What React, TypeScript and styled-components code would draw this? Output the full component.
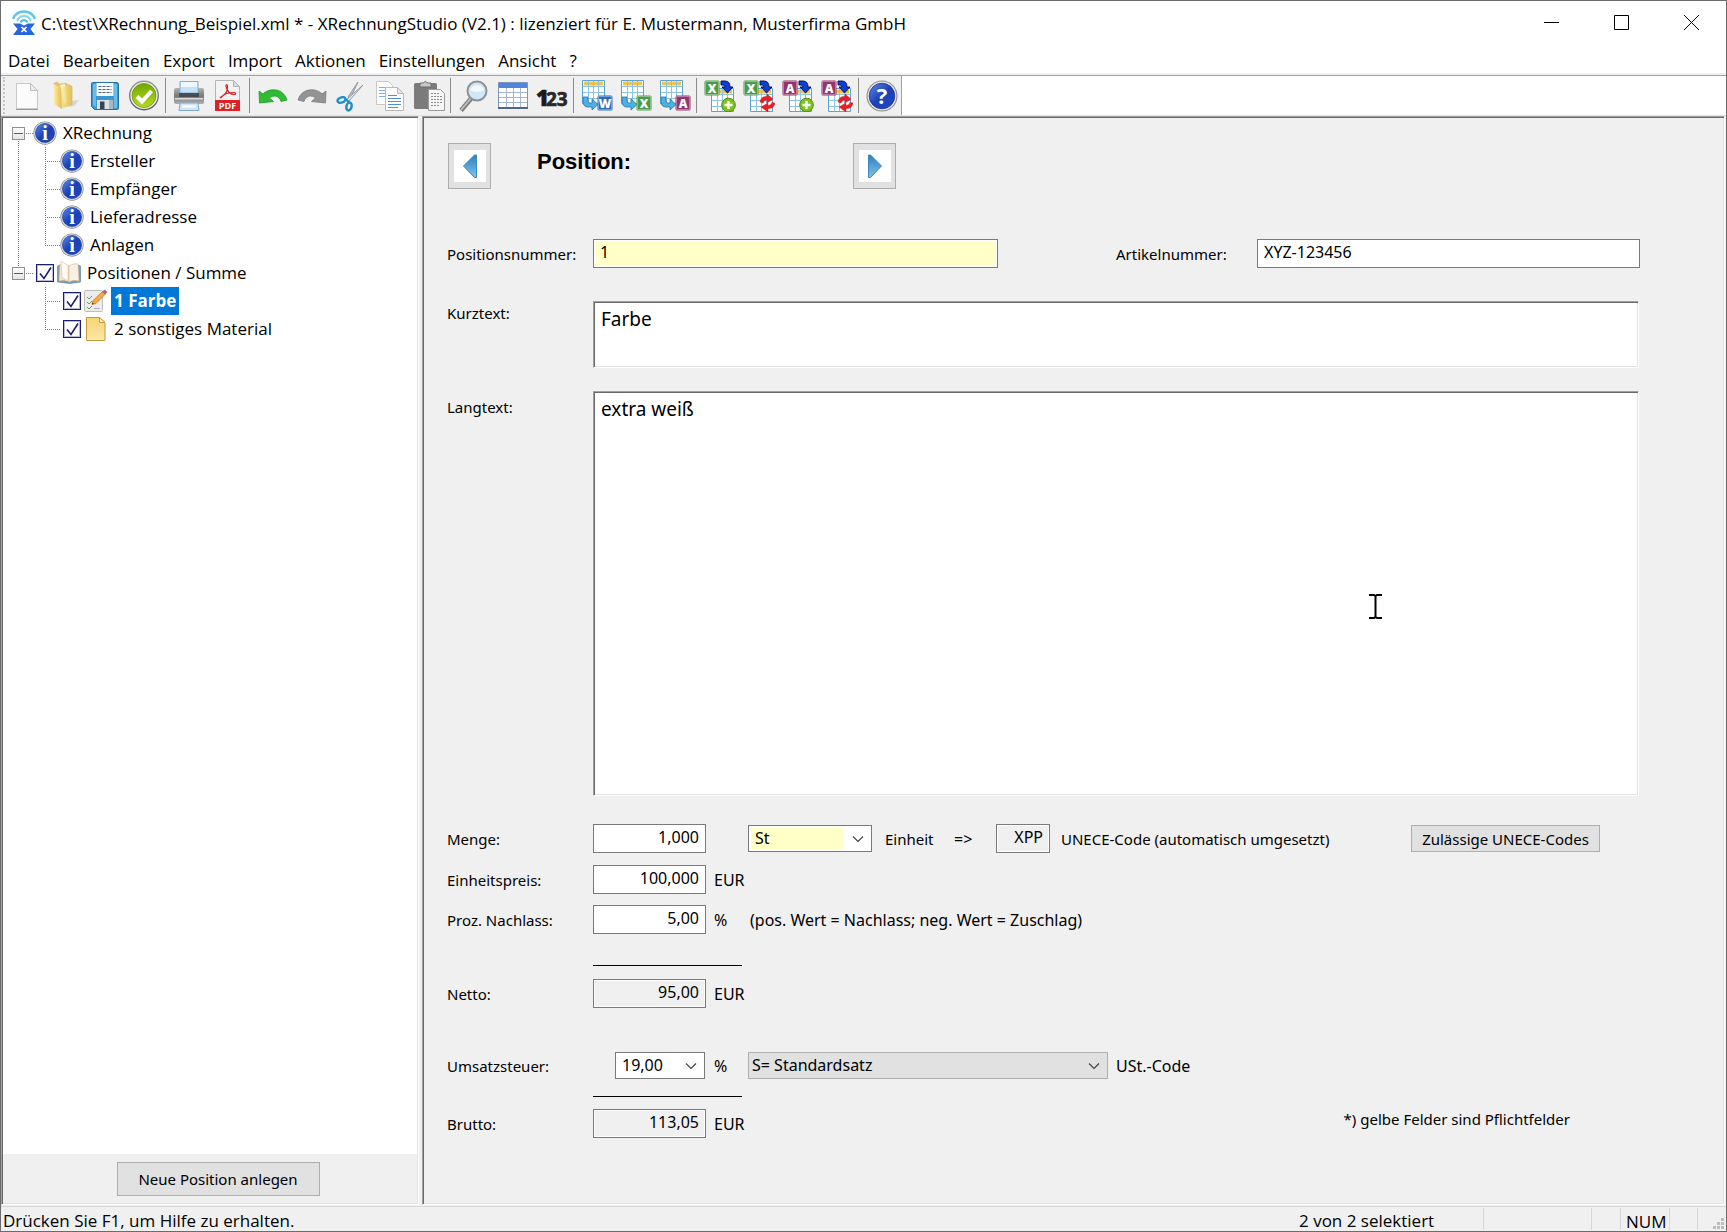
import React, { useState } from "react";
import styled, { createGlobalStyle, css } from "styled-components";

const uiFont = `"Open Sans", "Noto Sans", sans-serif`;
const formFont = `"Noto Sans", "Open Sans", sans-serif`;

const GlobalStyle = createGlobalStyle`
  * { box-sizing: border-box; }
  body { margin: 0; background: #f0f0f0; color: #000; font: 17px/24px ${uiFont}; }
  button, input, select, textarea { font: inherit; color: inherit; margin: 0; border-radius: 0; }
`;

/* ---------- window frame ---------- */

const Window = styled.div`
  display: flex;
  flex-direction: column;
  min-height: 100vh;
  border: 1px solid #6b6b6e;
  background: #f0f0f0;
`;

const TitleBar = styled.header`
  display: flex;
  align-items: center;
  height: 44px;
  padding-left: 10px;
  background: #fff;
`;

const Title = styled.h1`
  flex: 1;
  margin: 0;
  padding: 2px 0 0 4px;
  font-size: 17px;
  font-weight: 400;
  line-height: 24px;
  white-space: nowrap;
`;

const CaptionButton = styled.button`
  display: grid;
  place-items: center;
  width: 70px;
  height: 44px;
  padding: 0 0 2px;
  border: 0;
  background: transparent;
`;

const MenuBar = styled.nav`
  display: flex;
  gap: 13px;
  height: 30px;
  padding: 4px 7px 0;
  background: #fff;
  border-bottom: 2px solid #f0f0f0;
`;

const MenuItem = styled.button`
  padding: 0;
  border: 0;
  background: transparent;
  line-height: 24px;
`;

/* ---------- tool bar ---------- */

const ToolStrip = styled.div`
  display: flex;
  height: 41px;
  background: #fff;
  border-top: 1px solid #a0a0a0;
  border-bottom: 1px solid #e3e3e3;
`;

const ToolBar = styled.div`
  display: flex;
  align-items: center;
  background: #f0f0f0;
  border-right: 1px solid #a0a0a0;
`;

const Gripper = styled.span`
  width: 4px;
  height: 37px;
  margin-left: 2px;
  border-left: 2px dotted #c4c4c4;
`;

const ToolButton = styled.button`
  display: grid;
  place-items: center;
  width: 39px;
  height: 39px;
  padding: 0;
  border: 0;
  background: transparent;
`;

const ToolSeparator = styled.span`
  width: 6px;
  height: 35px;
  background: linear-gradient(#8c8c8c, #8c8c8c) no-repeat 2px 0 / 1px 100%;
`;

/* ---------- panes ---------- */

const Panes = styled.main`
  display: grid;
  grid-template-columns: 418px minmax(0, 1fr);
  column-gap: 3px;
  flex: 1;
  padding: 0 1px 1px 0;
`;

const sunken = css`
  border: 1px solid;
  border-color: #a0a0a0 #fff #fff #a0a0a0;
  box-shadow: inset 1px 1px 0 #696969, inset -1px -1px 0 #e3e3e3;
`;

const SidePane = styled.aside`
  ${sunken}
  display: flex;
  flex-direction: column;
  padding: 1px 1px 0;
`;

const Tree = styled.ul`
  flex: 1;
  margin: 0;
  padding: 1px 0 0;
  list-style: none;
  background: #fff;
`;

const TreeRow = styled.li`
  display: flex;
  align-items: center;
  height: 28px;
`;

const dotsDown = "repeating-linear-gradient(180deg, #808080 0 1px, transparent 1px 2px)";
const dotsAcross = "repeating-linear-gradient(90deg, #808080 0 1px, transparent 1px 2px)";

const Guide = styled.span<{ $line?: boolean }>`
  align-self: stretch;
  width: 27px;
  background: ${(p) => (p.$line ? `${dotsDown} no-repeat 15px 0 / 1px 100%` : "none")};
`;

type Branch = "first" | "middle" | "last";

const Connector = styled.span<{ $branch: Branch }>`
  display: grid;
  align-items: center;
  align-self: stretch;
  width: 30px;
  padding-left: 9px;
  background:
    ${dotsAcross} no-repeat 15px 14px / 15px 1px,
    ${dotsDown} no-repeat 15px ${(p) => (p.$branch === "first" ? "14px" : "0")} / 1px
      ${(p) => (p.$branch === "middle" ? "28px" : "14px")};
`;

const Expander = styled.button`
  display: grid;
  place-items: center;
  width: 13px;
  height: 13px;
  padding: 0;
  border: 1px solid #919191;
  background: linear-gradient(#fff, #e4e4e4);
  &::after {
    content: "";
    width: 9px;
    height: 1px;
    background: #3c5fb4;
  }
`;

const TickLabel = styled.label`
  display: grid;
  width: 18px;
  height: 18px;
  margin-right: 3px;
  & > * { grid-area: 1 / 1; }
  & > svg { pointer-events: none; visibility: hidden; }
  & > input:checked + svg { visibility: visible; }
`;

const TickInput = styled.input`
  appearance: none;
  width: 18px;
  height: 18px;
  background: #fff;
  border: 1px solid #1c1c70;
  box-shadow: inset 0 0 0 1px #b9b9dc;
`;

const TickGap = styled.span`
  width: 3px;
`;

const TreeIcon = styled.span`
  display: grid;
  place-items: center;
  width: 24px;
  height: 28px;
  margin-right: 3px;
`;

const TreeLabel = styled.span<{ $selected?: boolean }>`
  padding: 0 3px;
  line-height: 28px;
  white-space: nowrap;
  ${(p) => p.$selected && css`background: #0078d7; color: #fff; font-weight: 700;`}
`;

const SideFooter = styled.div`
  display: flex;
  justify-content: center;
  padding: 8px 0 8px 16px;
`;

const PushButton = styled.button<{ $tall?: boolean }>`
  height: ${(p) => (p.$tall ? 34 : 27)}px;
  width: ${(p) => (p.$tall ? 203 : 189)}px;
  padding: 0;
  border: 1px solid #adadad;
  background: #e1e1e1;
  font-family: ${formFont};
  font-size: 15px;
  line-height: 24px;
  white-space: nowrap;
`;

/* ---------- form ---------- */

const Form = styled.form`
  ${sunken}
  display: flex;
  flex-direction: column;
  padding: 26px 84px 66px 24px;
  font: 16px/24px ${formFont};
`;

const Pager = styled.div`
  display: flex;
  margin-bottom: 50px;
  padding-left: 1px;
`;

const PagerButton = styled.button`
  display: grid;
  place-items: center;
  width: 43px;
  height: 46px;
  padding: 0;
  border: 1px solid #adadad;
  background: #e1e1e1;
`;

const ArrowTile = styled.span`
  display: grid;
  place-items: center;
  width: 32px;
  height: 32px;
  background: #fff;
`;

const Heading = styled.h2`
  width: 362px;
  margin: 0;
  padding: 6px 46px;
  font: 700 22px/26px "Liberation Sans", Arial, sans-serif;
`;

const HeadRow = styled.div`
  display: grid;
  grid-template-columns: 146px 405fr 118px 141px 383fr;
  align-items: center;
  margin-bottom: 33px;
`;

const FieldLabel = styled.label`
  font-size: 15px;
  white-space: nowrap;
`;

const HeadFieldLabel = styled(FieldLabel)`
  grid-column: 4;
`;

const TextRow = styled.div<{ $grow?: boolean }>`
  display: grid;
  grid-template-columns: 146px minmax(0, 1fr);
  margin-bottom: ${(p) => (p.$grow ? 28 : 23)}px;
  padding-right: 1px;
  ${(p) => p.$grow && css`
    flex: 1;
    & > label { padding-top: 4px; }
  `}
`;

const TextAreaBox = styled.div`
  position: relative;
  display: grid;
`;

const TextArea = styled.textarea<{ $tall?: boolean }>`
  ${sunken}
  width: 100%;
  height: 100%;
  min-height: ${(p) => (p.$tall ? 200 : 67)}px;
  padding: 5px 7px;
  background: #fff;
  font-size: 19px;
  line-height: 24px;
  resize: none;
  outline: 0;
`;

const Pointer = styled.svg`
  position: absolute;
  top: 202px;
  right: 256px;
  pointer-events: none;
`;

const TextInput = styled.input<{ $required?: boolean; $width?: number }>`
  width: ${(p) => (p.$width ? `${p.$width}px` : "100%")};
  height: 29px;
  padding: 0 6px 3px;
  border: 1px solid #7a7a7a;
  box-shadow: inset 0 0 0 1px #fff;
  background: ${(p) => (p.$required ? "#ffffc8" : p.readOnly ? "#f0f0f0" : "#fff")};
  text-align: ${(p) => (p.$width ? "right" : "left")};
  line-height: 24px;
`;

const AmountRow = styled.div<{ $after?: number }>`
  display: grid;
  grid-template-columns: 146px 113px 42px minmax(0, 1fr);
  align-items: center;
  margin-bottom: ${(p) => p.$after ?? 0}px;
`;

const Unit = styled.span`
  padding-left: 8px;
`;

const Inline = styled.div`
  display: flex;
  align-items: center;
  white-space: nowrap;
`;

const Hint = styled.span`
  padding-left: 2px;
  white-space: nowrap;
`;

const UnitText = styled.label`
  width: 69px;
  padding-left: 13px;
  font-size: 15px;
`;

const Arrow = styled.span`
  width: 55px;
  padding-left: 13px;
`;

const CodeLabel = styled.label`
  flex: 1;
  padding-left: 11px;
  font-size: 15px;
`;

const CodesButton = styled(PushButton)`
  margin-right: 40px;
`;

const ComboBox = styled.span<{ $width: number; $end?: boolean }>`
  display: grid;
  align-items: center;
  justify-items: end;
  width: ${(p) => p.$width}px;
  justify-self: ${(p) => (p.$end ? "end" : "start")};
  margin-right: ${(p) => (p.$end ? 1 : 0)}px;
  & > * { grid-area: 1 / 1; }
  & > svg { margin-right: 8px; pointer-events: none; }
`;

const Combo = styled.select<{ $look: "required" | "plain" | "grey" }>`
  appearance: none;
  width: 100%;
  height: 27px;
  padding: 0 28px 2px ${(p) => (p.$look === "grey" ? 3 : 6)}px;
  border: 1px solid ${(p) => (p.$look === "grey" ? "#adadad" : "#7a7a7a")};
  background: ${(p) =>
    p.$look === "required"
      ? "linear-gradient(#ffffc8, #ffffc8) no-repeat 2px 2px / calc(100% - 30px) 21px #fff"
      : p.$look === "grey"
        ? "#e1e1e1"
        : "#fff"};
`;

const SumLine = styled.hr<{ $after: number }>`
  width: 149px;
  margin: 0 0 ${(p) => p.$after}px 146px;
  border: 0;
  border-top: 1px solid #000;
`;

const Footnote = styled.div`
  align-self: start;
  padding-right: 70px;
  font-size: 15px;
  line-height: 20px;
  text-align: right;
`;

/* ---------- status bar ---------- */

const StatusBar = styled.footer`
  display: flex;
  align-items: center;
  height: 25px;
  padding-left: 2px;
  border-top: 1px solid #d7d7d7;
  background: #f0f0f0;
  white-space: nowrap;
  line-height: 28px;
`;

const StatusText = styled.span`
  flex: 1;
  padding-top: 4px;
`;

const StatusCell = styled.span<{ $width: number }>`
  width: ${(p) => p.$width}px;
  height: 22px;
  padding-left: 5px;
  border-left: 1px solid #d7d7d7;
`;

const SelectionCell = styled.span`
  width: 184px;
  padding-top: 4px;
`;

const SizeGrip = styled.svg`
  align-self: flex-end;
  margin: 0 1px 1px 0;
`;

/* ---------- drawings ---------- */

const Logo = () => (
  <svg width="26" height="26" viewBox="0 0 26 26" fill="none">
    <path d="M2 9C4 4 8 1.500 13 1.500S22 4 24 9" stroke="#5cc8e4" strokeWidth="2.400" />
    <path d="M6 11C7.500 7.500 10 6 13 6s5.500 1.500 7 5" stroke="#7fd8ee" strokeWidth="2.200" />
    <path d="M9.500 12.500C10.500 10.500 11.500 10 13 10s2.500.5 3.500 2.500" stroke="#4fb5e6" strokeWidth="2" />
    <path d="M2 13.500h7l4 2 4-2h7L19.500 19l4.500 6H2l4.500-6z" fill="#2766e0" />
    <path d="M10.500 17l5 5M15.500 17l-5 5" stroke="#fff" strokeWidth="1.600" />
  </svg>
);

const NewIcon = () => (
  <svg width="32" height="32" viewBox="0 0 32 32">
    <path d="M5.500 3.500h14l7 7v18h-21z" fill="#fbfbfb" stroke="#c9c9c9" />
    <path d="M19.500 3.500l7 7h-7z" fill="#ececec" stroke="#bdbdbd" />
    <path d="M5 29.500h22" stroke="#9b9b9b" />
  </svg>
);

const OpenIcon = () => (
  <svg width="32" height="32" viewBox="0 0 32 32">
    <defs>
      <linearGradient id="folder" x1="0" x2="1"><stop offset="0" stopColor="#fbeaa2" /><stop offset="1" stopColor="#e5bd4d" /></linearGradient>
    </defs>
    <path d="M18 27l6-1 5-6-7 1z" fill="#c9c9c9" opacity=".7" />
    <path d="M4 3.500l3-1.500 2 2 7-.5 6 3v18l-12 3z" fill="#e7c868" stroke="#d3ad45" strokeWidth=".6" />
    <path d="M10 5l5-1 2 17-3 3z" fill="#fff6d5" />
    <path d="M4 4l7 4 1 21-8-5z" fill="url(#folder)" />
    <path d="M11 8l7-3 4 2v18l-10 4z" fill="url(#folder)" opacity=".75" />
  </svg>
);

const SaveIcon = () => (
  <svg width="32" height="32" viewBox="0 0 32 32">
    <path d="M2.500 3.500q0-1 1-1h25l1 1v25q0 1-1 1h-23l-3-3z" fill="#3f97cf" stroke="#2272aa" />
    <path d="M4 4h3v23l-3-2zM25 4h3v24h-3z" fill="#6cbce8" />
    <path d="M7.500 3h17v13h-17z" fill="#f4fafd" />
    <path d="M9.500 6.500h13M9.500 9.500h13M9.500 12.500h13" stroke="#59646c" strokeDasharray="3 1" />
    <path d="M8 20h16v9H8z" fill="#d9e2e8" />
    <path d="M11 21.500h4.500V29H11z" fill="#39444d" />
    <path d="M20 20h4v9h-4z" fill="#a9b8c1" />
  </svg>
);

const CheckIcon = () => (
  <svg width="32" height="32" viewBox="0 0 32 32">
    <defs>
      <linearGradient id="ring" x2="0" y2="1"><stop stopColor="#9a9a9a" /><stop offset="1" stopColor="#5c5c5c" /></linearGradient>
      <linearGradient id="lime" x2="0" y2="1"><stop stopColor="#6fa800" /><stop offset="1" stopColor="#b5dc1c" /></linearGradient>
    </defs>
    <circle cx="16" cy="15.500" r="15" fill="url(#ring)" />
    <circle cx="16" cy="15.500" r="13.600" fill="#f3f3f0" />
    <circle cx="16" cy="15.500" r="12" fill="url(#lime)" stroke="#6f8f1f" strokeWidth=".8" />
    <path d="M9 16.500l5 5L23.500 11" fill="none" stroke="#fff" strokeWidth="4" />
  </svg>
);

const PrintIcon = () => (
  <svg width="32" height="32" viewBox="0 0 32 32">
    <defs>
      <linearGradient id="printer" x2="0" y2="1"><stop stopColor="#b4b4b4" /><stop offset=".5" stopColor="#77787a" /><stop offset="1" stopColor="#b0b0b0" /></linearGradient>
    </defs>
    <rect x="1" y="8" width="30" height="16" rx="2" fill="url(#printer)" />
    <path d="M7 1.500h18V13H7z" fill="#c4e1f6" stroke="#7fb0d6" />
    <path d="M8 2h16v5H8z" fill="#eef8ff" />
    <path d="M6 13h20v4H6z" fill="#4c4d50" />
    <path d="M2 18h28v1.500H2z" fill="#dcdcdc" />
    <path d="M7 23h18l1 7.500H6z" fill="#cfe6f6" stroke="#7ea9c9" />
    <path d="M9 25.500h14v2H9z" fill="#fff" />
  </svg>
);

const PdfIcon = () => (
  <svg width="32" height="32" viewBox="0 0 32 32">
    <path d="M3.500.5h18l6 6v24h-24z" fill="#f3f3f3" stroke="#b4b4b4" />
    <path d="M21.500.5v6h6z" fill="#d8d8d8" stroke="#b4b4b4" />
    <path d="M9 17c4-2 7-6 6.500-11-.3-2-2-1.500-1.500.5.800 4 4 8 8 8 2.500 0 2-2-.5-2C17 12.500 12 14 9.500 17c-1 1-2 .8-.5 0z" fill="none" stroke="#dc2026" strokeWidth="1.200" />
    <path d="M3 20h25v11H3z" fill="#dd2127" />
    <text x="15.500" y="28.500" textAnchor="middle" fontFamily="Open Sans" fontWeight="700" fontSize="9" fill="#fff">PDF</text>
  </svg>
);

const UndoIcon = ({ redo = false }: { redo?: boolean }) => (
  <svg width="32" height="32" viewBox="0 0 32 32">
    <path
      transform={redo ? "translate(32 0) scale(-1 1)" : undefined}
      d="M2 11l4 3c5-6 20-7 24 6l-6 1.500C22 15 16 15 12.500 18l4 3.500L2.500 23z"
      fill={redo ? "#939393" : "#2fbb34"}
      stroke={redo ? "#7b7b7b" : "#1d9a2a"}
      strokeWidth=".8"
    />
  </svg>
);

const CutIcon = () => (
  <svg width="32" height="32" viewBox="0 0 32 32" fill="none">
    <path d="M23 2l-8 17-2-2z" fill="#b9c3cb" stroke="#7d8a94" strokeWidth=".8" />
    <path d="M28 5L14 21l-2-2z" fill="#dfe5e9" stroke="#7d8a94" strokeWidth=".8" />
    <ellipse cx="6.500" cy="20" rx="4.200" ry="2.600" transform="rotate(-20 6.500 20)" stroke="#1f8fc9" strokeWidth="2.400" />
    <ellipse cx="14" cy="26.500" rx="2.600" ry="4" transform="rotate(15 14 26.500)" stroke="#1f8fc9" strokeWidth="2.400" />
    <path d="M10 19l5 4" stroke="#1f8fc9" strokeWidth="2" />
  </svg>
);

const CopyIcon = () => (
  <svg width="32" height="32" viewBox="0 0 32 32">
    <path d="M2.500 1.500h12l4 4v19h-16z" fill="#fdfdfd" stroke="#c8c8c8" />
    <path d="M5 7.500h9M5 10.500h9M5 13.500h9M5 16.500h6" stroke="#7fb1de" />
    <path d="M11.500 7.500h12l6 6v17h-18z" fill="#fdfdfd" stroke="#b9b9b9" />
    <path d="M23.500 7.500v6h6z" fill="#e5e5e5" stroke="#b9b9b9" />
    <path d="M14 15.500h9M14 18.500h13M14 21.500h13M14 24.500h13M14 27.500h10" stroke="#4f90d0" />
  </svg>
);

const PasteIcon = () => (
  <svg width="32" height="32" viewBox="0 0 32 32">
    <rect x="1" y="3" width="23" height="26" rx="1.500" fill="#7b7b7b" />
    <path d="M7 3h3q2-3 5 0h3v4H7z" fill="#c9c9c9" stroke="#6c6c6c" />
    <path d="M15.500 9.500h12l4 4v17h-16z" fill="#f6f6f6" stroke="#9a9a9a" />
    <path d="M18 13.500h8M18 16.500h11M18 19.500h11M18 22.500h11M18 25.500h8" stroke="#8b8b8b" strokeDasharray="2 1" />
  </svg>
);

const FindIcon = () => (
  <svg width="32" height="32" viewBox="0 0 32 32">
    <path d="M3 30.500L13.500 18" stroke="#7c7c7c" strokeWidth="4.600" />
    <path d="M3 30L13.500 17.500" stroke="#c5c5c5" strokeWidth="1.600" />
    <circle cx="19" cy="11" r="9.500" fill="#cfe7f8" stroke="#8b9196" strokeWidth="2" />
    <path d="M12 10a7.500 7.500 0 0 1 14 0q-7 4-14 0z" fill="#f2faff" />
  </svg>
);

const TableIcon = () => (
  <svg width="32" height="32" viewBox="0 0 32 32">
    <path d="M1.500 2.500h29v25h-29z" fill="#fff" stroke="#7d93bd" />
    <path d="M2 3h28v5H2z" fill="#4d86dc" />
    <path d="M2 12.500h28M2 17.500h28M2 22.500h28M9.500 8v19M16.500 8v19M23.500 8v19" stroke="#a5b5d6" />
    <path d="M1 28h30" stroke="#52658d" strokeWidth="2" />
  </svg>
);

const NumbersIcon = () => (
  <svg width="34" height="32" viewBox="0 0 34 32">
    <text x="1" y="26" fontFamily="Open Sans" fontWeight="800" fontSize="22" fill="#1c1a1b" stroke="#1c1a1b" strokeWidth=".6">1</text>
    <text x="11" y="26" fontFamily="Open Sans" fontWeight="700" fontSize="19" fill="#2b2728" stroke="#2b2728" strokeWidth=".6">23</text>
  </svg>
);

const appColors: Record<string, string> = { W: "#2b6cb8", X: "#4c9a48", A: "#96346f" };

const MiniGrid = ({ x, y }: { x: number; y: number }) => (
  <g transform={`translate(${x} ${y})`}>
    <path d="M.5.5h22v23H.5z" fill="#fff" stroke="#5aa3d0" />
    <path d="M2 1.500h19v4H2z" fill="#f3c34e" />
    <path d="M1 6.500h21M1 12.500h21M1 18.500h21M6.500 1v22M11.500 1v22M16.500 1v22" stroke="#8dc3e3" />
  </g>
);

const AppTile = ({ letter, x, y }: { letter: string; x: number; y: number }) => (
  <g transform={`translate(${x} ${y})`}>
    <rect x=".5" y=".5" width="15" height="15" rx="1.500" fill={appColors[letter]} />
    <rect x="1.500" y="1.500" width="13" height="13" fill="none" stroke="#fff" strokeOpacity=".35" />
    <text x="8" y="12.500" textAnchor="middle" fontFamily="Open Sans" fontWeight="800" fontSize="12" fill="#fff">{letter}</text>
  </g>
);

const ExportIcon = ({ letter }: { letter: string }) => (
  <svg width="32" height="32" viewBox="0 0 32 32">
    <MiniGrid x={1} y={0} />
    <path d="M2 17h5v4q0 2 2 2h2v-4l6 5.500-6 5.500v-3H7q-5 0-5-6z" fill="#4fb0e4" stroke="#2176ac" strokeWidth=".8" />
    <AppTile letter={letter} x={16} y={15} />
  </svg>
);

const ImportIcon = ({ letter, refresh = false }: { letter: string; refresh?: boolean }) => (
  <svg width="32" height="32" viewBox="0 0 32 32">
    <MiniGrid x={7} y={8} />
    <AppTile letter={letter} x={0} y={0} />
    <path d="M17 1h4q5 0 5 6h3l-5.500 6L18 7h3q0-2-2-2h-2z" fill="#0b3fd6" stroke="#020c50" strokeWidth=".9" />
    {refresh ? (
      <g fill="#f01c23" stroke="#c00a10" strokeWidth=".4">
        <path d="M17 22q1-6 7-5.500V14l6 5-6 4v-3q-3 0-4 3z" />
        <path d="M32 23q-1 6-7 5.500V32l-7-5 7-4v2.500q3 0 4-3z" />
      </g>
    ) : (
      <g>
        <circle cx="24.500" cy="25" r="6.800" fill="#7fc31c" stroke="#4f8a10" />
        <path d="M24.500 21v8M20.500 25h8" stroke="#fff" strokeWidth="2.400" />
      </g>
    )}
  </svg>
);

const BallIcon = ({ size, glyph }: { size: number; glyph: "?" | "i" }) => (
  <svg width={size} height={size} viewBox="0 0 32 32">
    <defs>
      <linearGradient id={`ball${size}`} x1="0" y1="0" x2="1" y2="1">
        <stop stopColor="#5f8df0" /><stop offset=".5" stopColor="#1b41b5" /><stop offset="1" stopColor="#1d49c6" />
      </linearGradient>
    </defs>
    <circle cx="16" cy="16" r="15.500" fill="#8d8d92" />
    <circle cx="16" cy="16" r="14.400" fill="#e4e4e6" />
    <circle cx="16" cy="16" r="12.800" fill={`url(#ball${size})`} stroke="#16308c" strokeWidth=".8" />
    <text
      x="16"
      y={glyph === "?" ? 24 : 25}
      textAnchor="middle"
      fontFamily={glyph === "?" ? "Open Sans" : "Liberation Serif"}
      fontWeight="700"
      fontSize={glyph === "?" ? 22 : 27}
      fill="#fff"
    >
      {glyph}
    </text>
  </svg>
);

const BookIcon = () => (
  <svg width="24" height="24" viewBox="0 0 24 24">
    <path d="M.5 5l3-1v15l8 1 9-1V4l3 1v16l-11 1.500L.5 21z" fill="#7f9db4" stroke="#587890" strokeWidth=".6" />
    <path d="M3 3q5-1 9 2v16q-4-3-10-1z" fill="#f4e3cd" stroke="#d2b99a" strokeWidth=".6" />
    <path d="M12 5q4-3 9-2l1 17q-6-2-10 1z" fill="#fbf1e3" stroke="#d2b99a" strokeWidth=".6" />
    <path d="M4 0l7 4.500V20l-6-3.500z" fill="#fffaf2" stroke="#d9c4a8" strokeWidth=".6" />
  </svg>
);

const NoteIcon = () => (
  <svg width="24" height="24" viewBox="0 0 24 24" fill="none">
    <rect x=".5" y="1.500" width="18" height="21" rx="1" fill="#ececec" stroke="#bcbcbc" />
    <path d="M3 8l2 2 3-3M3 13l2 2 3-3M3 18l2 2 3-3" stroke="#61a84d" />
    <path d="M10 19.500h6" stroke="#b0b0b0" />
    <path d="M8 15.500l1-4L19 2l3 2.500-10 10z" fill="#f2aa41" stroke="#b8762a" strokeWidth=".7" />
    <path d="M18 3l2.500-2.500 3 2.500-2.500 2.500z" fill="#a6688c" />
    <path d="M8 15.500l.5-2 1.500 1.200z" fill="#333" />
  </svg>
);

const SheetIcon = () => (
  <svg width="24" height="24" viewBox="0 0 24 24">
    <defs>
      <linearGradient id="sheet" x2="0" y2="1"><stop stopColor="#f6d573" /><stop offset="1" stopColor="#fbe7a8" /></linearGradient>
    </defs>
    <path d="M2.500.5h13l5.500 5v18H2.500z" fill="url(#sheet)" stroke="#c79a3b" />
    <path d="M15.500.5v5H21z" fill="#fff2c6" stroke="#c79a3b" />
  </svg>
);

const Chevron = () => (
  <svg width="12" height="8" viewBox="0 0 12 8" fill="none">
    <path d="M1 1.500l5 5 5-5" stroke="#444" strokeWidth="1.200" />
  </svg>
);

const PageArrow = ({ forward = false }: { forward?: boolean }) => (
  <svg width="16" height="26" viewBox="0 0 16 26">
    <defs>
      <linearGradient id={forward ? "fwd" : "back"} x2="0" y2="1"><stop stopColor="#2d7fbd" /><stop offset="1" stopColor="#7cc4ee" /></linearGradient>
    </defs>
    <path
      transform={forward ? undefined : "translate(16 0) scale(-1 1)"}
      d="M1.500 2h2l11 11-11 11.500h-2z"
      fill={`url(#${forward ? "fwd" : "back"})`}
      stroke="#3f86ba"
    />
  </svg>
);

/* ---------- data ---------- */

const menus = ["Datei", "Bearbeiten", "Export", "Import", "Aktionen", "Einstellungen", "Ansicht", "?"];

const toolGroups: { name: string; icon: React.ReactNode }[][] = [
  [
    { name: "Neu", icon: <NewIcon /> },
    { name: "Öffnen", icon: <OpenIcon /> },
    { name: "Speichern", icon: <SaveIcon /> },
    { name: "Prüfen", icon: <CheckIcon /> },
  ],
  [
    { name: "Drucken", icon: <PrintIcon /> },
    { name: "PDF", icon: <PdfIcon /> },
  ],
  [
    { name: "Rückgängig", icon: <UndoIcon /> },
    { name: "Wiederholen", icon: <UndoIcon redo /> },
    { name: "Ausschneiden", icon: <CutIcon /> },
    { name: "Kopieren", icon: <CopyIcon /> },
    { name: "Einfügen", icon: <PasteIcon /> },
  ],
  [
    { name: "Suchen", icon: <FindIcon /> },
    { name: "Tabelle", icon: <TableIcon /> },
    { name: "Nummerieren", icon: <NumbersIcon /> },
  ],
  [
    { name: "Export Word", icon: <ExportIcon letter="W" /> },
    { name: "Export Excel", icon: <ExportIcon letter="X" /> },
    { name: "Export Access", icon: <ExportIcon letter="A" /> },
  ],
  [
    { name: "Import Excel", icon: <ImportIcon letter="X" /> },
    { name: "Excel aktualisieren", icon: <ImportIcon letter="X" refresh /> },
    { name: "Import Access", icon: <ImportIcon letter="A" /> },
    { name: "Access aktualisieren", icon: <ImportIcon letter="A" refresh /> },
  ],
  [{ name: "Hilfe", icon: <BallIcon size={32} glyph="?" /> }],
];

interface TreeNode {
  text: string;
  icon: React.ReactNode;
  branch: Branch;
  root?: boolean;
  trunk?: boolean;
  tick?: boolean;
  selected?: boolean;
}

const info = <BallIcon size={24} glyph="i" />;

const nodes: TreeNode[] = [
  { text: "XRechnung", icon: info, branch: "first", root: true },
  { text: "Ersteller", icon: info, branch: "middle", trunk: true },
  { text: "Empfänger", icon: info, branch: "middle", trunk: true },
  { text: "Lieferadresse", icon: info, branch: "middle", trunk: true },
  { text: "Anlagen", icon: info, branch: "last", trunk: true },
  { text: "Positionen / Summe", icon: <BookIcon />, branch: "last", root: true, tick: true },
  { text: "1 Farbe", icon: <NoteIcon />, branch: "middle", tick: true, selected: true },
  { text: "2 sonstiges Material", icon: <SheetIcon />, branch: "last", tick: true },
];

/* ---------- parts ---------- */

const TreeItem = ({ node }: { node: TreeNode }) => (
  <TreeRow>
    {!node.root && <Guide $line={node.trunk} />}
    <Connector $branch={node.branch}>
      {node.root && <Expander type="button" aria-label={`${node.text} zuklappen`} />}
    </Connector>
    {node.tick && (
      <>
        <TickGap />
        <TickLabel>
          <TickInput type="checkbox" defaultChecked aria-label={node.text} />
          <svg width="18" height="18" viewBox="0 0 18 18" fill="none">
            <path d="M4 9.500l4 5L15 3.500" stroke="#1c1c70" strokeWidth="1.600" />
          </svg>
        </TickLabel>
      </>
    )}
    <TreeIcon>{node.icon}</TreeIcon>
    <TreeLabel $selected={node.selected}>{node.text}</TreeLabel>
  </TreeRow>
);

export default function App() {
  const [shortText, setShortText] = useState("Farbe");
  const [longText, setLongText] = useState("extra weiß");

  return (
    <>
      <GlobalStyle />
      <Window>
        <TitleBar>
          <Logo />
          <Title>C:\test\XRechnung_Beispiel.xml * - XRechnungStudio (V2.1) : lizenziert für E. Mustermann, Musterfirma GmbH</Title>
          <CaptionButton type="button" aria-label="Minimieren">
            <svg width="15" height="15"><path d="M0 7.500h15" stroke="#000" /></svg>
          </CaptionButton>
          <CaptionButton type="button" aria-label="Maximieren">
            <svg width="15" height="15"><path d="M.5.5h14v14H.5z" stroke="#000" fill="none" /></svg>
          </CaptionButton>
          <CaptionButton type="button" aria-label="Schließen">
            <svg width="15" height="15"><path d="M0 0l15 15M15 0L0 15" stroke="#000" /></svg>
          </CaptionButton>
        </TitleBar>
        <MenuBar>
          {menus.map((m) => <MenuItem type="button" key={m}>{m}</MenuItem>)}
        </MenuBar>
        <ToolStrip>
          <ToolBar>
            <Gripper />
            {toolGroups.map((group, i) => (
              <React.Fragment key={i}>
                {i > 0 && <ToolSeparator />}
                {group.map((t) => (
                  <ToolButton type="button" key={t.name} aria-label={t.name}>{t.icon}</ToolButton>
                ))}
              </React.Fragment>
            ))}
          </ToolBar>
        </ToolStrip>

        <Panes>
          <SidePane>
            <Tree>
              {nodes.map((n) => <TreeItem key={n.text} node={n} />)}
            </Tree>
            <SideFooter>
              <PushButton type="button" $tall>Neue Position anlegen</PushButton>
            </SideFooter>
          </SidePane>

          <Form onSubmit={(e) => e.preventDefault()}>
            <Pager>
              <PagerButton type="button" aria-label="Vorherige Position"><ArrowTile><PageArrow /></ArrowTile></PagerButton>
              <Heading>Position:</Heading>
              <PagerButton type="button" aria-label="Nächste Position"><ArrowTile><PageArrow forward /></ArrowTile></PagerButton>
            </Pager>

            <HeadRow>
              <FieldLabel htmlFor="posnr">Positionsnummer:</FieldLabel>
              <TextInput id="posnr" $required defaultValue="1" />
              <HeadFieldLabel htmlFor="artnr">Artikelnummer:</HeadFieldLabel>
              <TextInput id="artnr" defaultValue="XYZ-123456" />
            </HeadRow>

            <TextRow>
              <FieldLabel htmlFor="kurz">Kurztext:</FieldLabel>
              <TextAreaBox>
                <TextArea id="kurz" value={shortText} onChange={(e) => setShortText(e.target.value)} />
              </TextAreaBox>
            </TextRow>
            <TextRow $grow>
              <FieldLabel htmlFor="lang">Langtext:</FieldLabel>
              <TextAreaBox>
                <TextArea id="lang" $tall value={longText} onChange={(e) => setLongText(e.target.value)} />
                <Pointer width="15" height="26" viewBox="0 0 15 26" fill="none">
                  <path d="M1 2h5l1.500 1L9 2h5M1 25h5l1.500-1L9 25h5M7.500 3v21" stroke="#000" strokeWidth="2" />
                </Pointer>
              </TextAreaBox>
            </TextRow>

            <AmountRow $after={12}>
              <FieldLabel htmlFor="menge">Menge:</FieldLabel>
              <TextInput id="menge" $width={113} defaultValue="1,000" />
              <span />
              <Inline>
                <ComboBox $width={124}>
                  <Combo id="einheit" $look="required"><option>St</option></Combo>
                  <Chevron />
                </ComboBox>
                <UnitText htmlFor="einheit">Einheit</UnitText>
                <Arrow>=&gt;</Arrow>
                <TextInput id="unece" $width={54} readOnly defaultValue="XPP" />
                <CodeLabel htmlFor="unece">UNECE-Code (automatisch umgesetzt)</CodeLabel>
                <CodesButton type="button">Zulässige UNECE-Codes</CodesButton>
              </Inline>
            </AmountRow>
            <AmountRow $after={11}>
              <FieldLabel htmlFor="preis">Einheitspreis:</FieldLabel>
              <TextInput id="preis" $width={113} defaultValue="100,000" />
              <Unit>EUR</Unit>
            </AmountRow>
            <AmountRow $after={31}>
              <FieldLabel htmlFor="nachlass">Proz. Nachlass:</FieldLabel>
              <TextInput id="nachlass" $width={113} defaultValue="5,00" />
              <Unit>%</Unit>
              <Hint>(pos. Wert = Nachlass; neg. Wert = Zuschlag)</Hint>
            </AmountRow>
            <SumLine $after={13} />
            <AmountRow $after={44}>
              <FieldLabel htmlFor="netto">Netto:</FieldLabel>
              <TextInput id="netto" $width={113} readOnly defaultValue="95,00" />
              <Unit>EUR</Unit>
            </AmountRow>
            <AmountRow $after={17}>
              <FieldLabel htmlFor="ust">Umsatzsteuer:</FieldLabel>
              <ComboBox $width={90} $end>
                <Combo id="ust" $look="plain"><option>19,00</option></Combo>
                <Chevron />
              </ComboBox>
              <Unit>%</Unit>
              <Inline>
                <ComboBox $width={360}>
                  <Combo id="ustcode" $look="grey"><option>S= Standardsatz</option></Combo>
                  <Chevron />
                </ComboBox>
                <Unit as="label" htmlFor="ustcode">USt.-Code</Unit>
              </Inline>
            </AmountRow>
            <SumLine $after={12} />
            <AmountRow>
              <FieldLabel htmlFor="brutto">Brutto:</FieldLabel>
              <TextInput id="brutto" $width={113} readOnly defaultValue="113,05" />
              <Unit>EUR</Unit>
              <Footnote>*) gelbe Felder sind Pflichtfelder</Footnote>
            </AmountRow>
          </Form>
        </Panes>

        <StatusBar>
          <StatusText>Drücken Sie F1, um Hilfe zu erhalten.</StatusText>
          <SelectionCell>2 von 2 selektiert</SelectionCell>
          <StatusCell $width={108} />
          <StatusCell $width={29} />
          <StatusCell $width={49}>NUM</StatusCell>
          <StatusCell $width={28} />
          <StatusCell $width={16} />
          <SizeGrip width="12" height="12" fill="#bdbdbd">
            <path d="M8 0h3v3H8zM4 4h3v3H4zM8 4h3v3H8zM0 8h3v3H0zM4 8h3v3H4zM8 8h3v3H8z" />
          </SizeGrip>
        </StatusBar>
      </Window>
    </>
  );
}
